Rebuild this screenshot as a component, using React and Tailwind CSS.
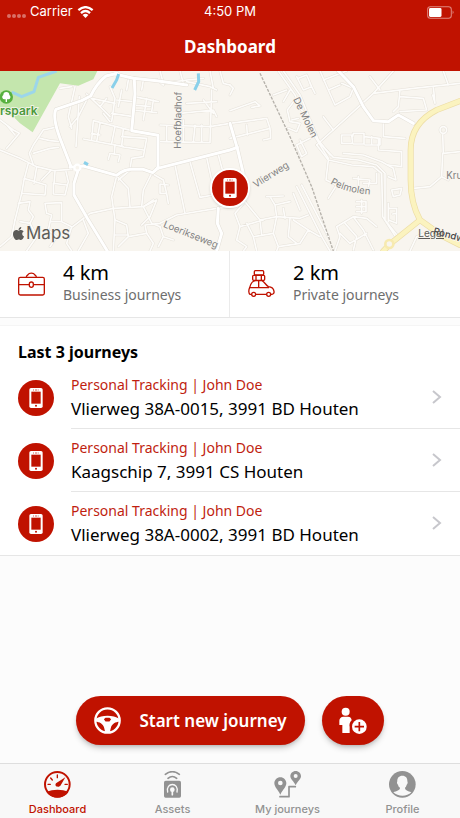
import { FaApple } from "react-icons/fa";

const journeys = [
  { id: 1, asset: "Personal Tracking | John Doe", address: "Vlierweg 38A-0015, 3991 BD Houten" },
  { id: 2, asset: "Personal Tracking | John Doe", address: "Kaagschip 7, 3991 CS Houten" },
  { id: 3, asset: "Personal Tracking | John Doe", address: "Vlierweg 38A-0002, 3991 BD Houten" }
];

const minorRoads = [
  // west
  "M0 150 L40 180 L58 190 L20 235 M20 165 L45 195 M0 240 L60 265 L110 290 L160 302 L215 298",
  "M130 180 L100 225 L88 250 L100 285 M120 205 L150 212 L180 215 M130 180 L165 172 M100 250 L150 235 L175 232",
  "M85 280 L72 330 L65 370 L135 375 L138 345 L72 325 M110 290 L102 340 M152 302 L125 330 M165 305 L162 340 L200 345 M160 340 L160 372 L195 375 L205 335 L198 305",
  "M65 370 L45 450 M55 400 L90 395 L85 420 L100 440 L90 460 L60 455 M135 400 L185 398 L185 455 L150 455 M135 400 L140 430 L155 435 L145 480 L170 500 L150 530 M185 455 L215 470 L200 520 L215 543",
  "M45 450 L35 500 L0 530 M90 460 L110 500 L80 543 M218 470 L270 430 L340 415 L430 410 L460 390",
  // north of the park
  "M225 50 L205 140 L215 175 M238 80 L228 230 M260 90 L235 140 L210 170 M180 55 L215 50",
  "M260 72 L300 110 L330 140 M300 110 L320 85 M275 85 L345 100 M330 50 L345 85 L335 155 M365 60 L355 110 M350 90 L400 95 M335 130 L400 140 M330 155 L310 130",
  "M280 152 L395 182 M280 152 L275 210 M250 207 L370 230 M300 160 L290 215 M345 170 L335 220 M275 190 L300 195 M370 175 L365 230 L430 240 M365 200 L440 205 L430 260 L395 265 L390 298",
  "M330 250 L360 255 L355 275 M330 250 L325 268 M345 225 L343 252 M403 80 L475 95 M400 120 L470 128 M440 85 L430 150 M460 90 L455 125 M400 105 L450 110",
  "M385 30 L380 60 M430 30 L425 60 M470 28 L490 45 M480 3 L490 40 L560 30 L610 25 M540 3 L550 40 M560 35 L630 50 L650 60 M630 3 L640 55 M660 3 L670 40 L690 45",
  "M480 165 L630 170 L690 160 M480 215 L630 218 L635 60 M585 165 L580 218 M550 150 L550 215 M605 165 L605 218 M500 170 L500 215 M560 100 L650 95 M540 130 L640 120 L650 140 M610 90 L640 130",
  // centre
  "M350 318 L335 380 L345 450 L340 543 M350 318 L385 355 L390 410 M390 300 L355 330 M455 310 L430 360 L425 410 M455 310 L490 330 L500 370 L480 370 L480 342 L505 345 M500 370 L505 400",
  "M430 410 L470 390 L450 440 L425 465 M430 410 L455 460 L480 470 M345 450 L380 465 L385 500 L440 490 L435 465 L480 460 M345 495 L385 495 M355 530 L385 500 M480 460 L530 435 L650 415 L700 410",
  "M525 285 L555 430 M570 275 L600 382 L640 375 M620 262 L635 330 M655 255 L670 310 M480 470 L490 500 L475 530 M490 500 L520 510 M440 490 L460 520 L450 543 M250 450 L265 490 L235 543",
  // around the station
  "M690 45 L700 55 L690 75 M690 122 L765 95 L780 108 L755 112 M690 205 L810 175 L800 145 L690 160 M810 175 L812 205 L790 210 M740 165 L742 195",
  "M835 3 L885 75 L930 175 L985 265 M850 3 L900 75 L955 210 L990 255 M820 75 L860 60 M870 60 L850 95 M885 90 L862 120 L870 155 L900 160 L890 185 L865 175 M875 150 L895 145 M900 210 L920 250 L905 260 L890 225 L930 205",
  "M890 20 L910 60 L935 50 L920 15 L895 25 M930 40 L945 70 M960 3 L985 60 L1005 105 L1050 80 L1060 55 L1025 40 M970 30 L1040 3 M985 60 L1020 45",
  "M950 225 L1060 125 L1120 70 L1240 55 L1380 40 M970 140 L1000 180 M1120 70 L1180 3 M1140 60 L1110 20 M1200 60 L1195 110 L1180 125 M1200 80 L1270 85 L1280 120 L1200 125 M1300 50 L1305 100 L1298 75 M1330 3 L1345 45",
  // east residential
  "M1025 195 L1055 195 L1058 220 L1025 220 Z M1058 200 L1060 190 L1092 190 L1092 222 L1060 222 M1092 200 L1140 205 L1140 225 L1095 225 M1115 200 L1115 225 M1150 160 L1150 200 L1215 205 M1135 205 L1135 240 L1205 245 L1205 290 L1165 285",
  "M950 225 L985 270 L1055 285 L1120 290 L1145 310 L1148 440 L1190 505 M960 220 L1000 262 L1075 270 L1130 285 L1155 310 L1155 450 L1195 500 M1030 250 L1090 255 L1145 275 L1180 295 L1188 330 L1165 320 M985 270 L978 330 L1010 345",
  "M1010 345 L985 385 M1060 325 L1110 330 L1105 350 M1075 320 L1075 345 M1090 340 L1130 340 L1130 310 M1070 395 L1098 395 L1098 425 L1070 425 M1085 390 L1085 430 M1070 410 L1098 410",
  "M1175 360 L1205 355 L1200 375 L1180 380 Z M1165 415 L1190 415 L1190 460 L1165 450 M1165 400 L1165 455 M1190 430 L1178 432 M1240 355 L1290 350 L1325 320 M1320 180 a10 10 0 1 0 20 0 a10 10 0 1 0 -20 0 M1328 190 L1330 250 L1380 245 M1328 250 L1325 320 L1345 330",
  // south
  "M800 380 L850 378 M810 380 L825 405 L870 395 M825 405 L830 440 L780 450 L735 395 M830 440 L900 445 L925 435 M850 415 L855 445 M890 350 L965 500 L990 543 M905 345 L985 500 M880 370 L900 420",
  "M735 395 L705 430 L720 470 L790 450 M720 470 L710 510 L740 530 L730 543 M740 460 L760 500 L820 490 L830 440 M760 500 L770 543 M820 490 L835 530 L900 520 L925 480 L880 450 M835 530 L830 543 M780 450 L785 495 M870 445 L865 500 L890 520 M925 480 L960 500",
  "M1010 470 L1060 440 L1100 445 L1130 470 M1020 490 L1050 520 L1100 490 M1035 460 L1070 500 L1060 540 M1060 440 L1090 480 L1120 540 M1010 470 L1020 500 L1005 543 M1230 543 L1250 500 L1300 480"
];

const majorRoads = [
  "M352 10 L318 18 Q290 40 272 78 L245 92 L168 118 Q156 140 180 205 L213 290",
  "M345 12 L400 25 L470 32 L560 45",
  "M210 292 L250 288 L350 316 Q375 296 400 298 L430 298 L458 308 L474 294",
  "M236 296 L222 340 L222 375 L262 445 L322 543",
  "M403 30 L405 72 L395 182 L474 196 L474 290",
  "M470 296 L690 240 L712 232",
  "M730 310 L712 235 L690 160",
  "M655 415 L652 460 L665 490 L650 543",
  "M1015 3 L1060 50 L1090 110 L1120 152 L1165 155 L1195 135 L1240 160"
];

const ringRoad =
  "M1380 93L1310 120Q1232 160 1232 240V330Q1232 400 1260 450M1260 450L1170 522L1150 543M1260 450L1330 500L1380 525";

function PhoneGlyph({ className }) {
  return (
    <svg viewBox="0 0 40 60" className={className} aria-hidden="true">
      <rect width="40" height="60" rx="5" fill="#fff" />
      <rect x="6" y="11" width="28" height="36" fill="#c01200" />
      <path d="M11 6h3M17 6h7M27 6h2" stroke="#c01200" strokeWidth="2" />
      <circle cx="20" cy="53" r="3" fill="#c01200" />
    </svg>
  );
}

function MapView() {
  return (
    <section aria-label="Map" className="relative h-[180px] overflow-hidden bg-[#f8f5ef]">
      <svg
        viewBox="0 3 1380 540"
        preserveAspectRatio="xMidYMid slice"
        className="h-full w-full font-['Inter',sans-serif]"
        aria-hidden="true"
      >
        <path d="M0 3H292L280 28L235 47L180 40L98 187L60 160L42 142L0 120Z" fill="#c4e6ad" />
        <path d="M170 3L115 22L102 65L65 80L35 66" fill="none" stroke="#9cd6ea" strokeWidth="9" strokeLinejoin="round" />
        <g fill="none" strokeLinejoin="round" strokeLinecap="round">
          {minorRoads.map((d) => (
            <path key={d} d={d} stroke="#e6e2da" strokeWidth="8" />
          ))}
          {minorRoads.map((d) => (
            <path key={d} d={d} stroke="#fdfcfa" strokeWidth="5" />
          ))}
          {majorRoads.map((d) => (
            <path key={d} d={d} stroke="#e3dfd7" strokeWidth="12" />
          ))}
          {majorRoads.map((d) => (
            <path key={d} d={d} stroke="#fff" strokeWidth="9" />
          ))}
          <path d={ringRoad} stroke="#ecdca4" strokeWidth="18" />
          <path d={ringRoad} stroke="#fbf3bf" strokeWidth="14" />
          <circle cx="1168" cy="522" r="12" fill="#f8f5ef" stroke="#f7eab0" strokeWidth="8" />
        </g>
        <circle cx="232" cy="293" r="9" fill="#f8f5ef" stroke="#fff" strokeWidth="7" />
        <path d="M356 12L350 30L336 54M595 10L596 35L584 60M252 277L264 284" fill="none" stroke="#8ad0ea" strokeWidth="9" />
        <path d="M780 10L870 200L935 350L1000 543" fill="none" stroke="#b5b1aa" strokeWidth="4" strokeDasharray="9 4" />
        <circle cx="19" cy="81" r="20" fill="#58b13f" />
        <path d="M19 66a9 9 0 0 1 9 9 7 7 0 0 1-4 13h-3v8h-4v-8h-3a7 7 0 0 1-4-13 9 9 0 0 1 9-9Z" fill="#fff" />
        <g fontSize="29" fill="#808080" stroke="#f8f5ef" strokeWidth="5" paintOrder="stroke">
          <text x="0" y="136" fontSize="36" fontWeight="600" fill="#4c9a3c">rspark</text>
          <text transform="translate(542 236) rotate(-89)">Hoefbladhof</text>
          <text transform="translate(488 470) rotate(22)">Loerikseweg</text>
          <text transform="translate(767 354) rotate(-32)">Vlierweg</text>
          <text transform="translate(879 88) rotate(64)">De Molen</text>
          <path id="pelmolen" d="M990 340Q1040 372 1130 374" fill="none" stroke="none" />
          <text>
            <textPath href="#pelmolen">Pelmolen</textPath>
          </text>
          <text x="1339" y="328">Kru</text>
          <text transform="translate(1298 492) rotate(15)" fill="#444" fontWeight="500">Rondweg</text>
        </g>
      </svg>

      <div className="absolute bottom-2 left-[11px] flex items-center font-['Inter',sans-serif] text-[17px] leading-5 text-[#5c5b58]">
        <FaApple className="size-[15px]" aria-hidden="true" />
        Maps
      </div>
      <a href="#legal" className="absolute right-4 bottom-2 font-['Inter',sans-serif] text-[10px] leading-5 text-[#5c5b58] underline">
        Legal
      </a>
      <div className="absolute top-[97px] left-1/2 flex size-10 -translate-x-1/2 items-center justify-center rounded-full border-2 border-white bg-[#c01200] shadow">
        <PhoneGlyph className="h-5 w-[14px]" />
      </div>
    </section>
  );
}

function BriefcaseIcon() {
  return (
    <svg viewBox="54 54 81 81" className="size-[27px]" fill="none" stroke="#c01200" strokeWidth="4" aria-hidden="true">
      <rect x="56" y="76" width="77" height="53" rx="5" />
      <path d="M56 98h32M100 98h33M79 75c1-6 5-5 6-8 2-5 16-5 18 0 1 3 5 2 6 8" />
      <rect x="88" y="90" width="12" height="16" rx="6" />
    </svg>
  );
}

function CarIcon() {
  return (
    <svg viewBox="54 60 81 81" className="size-[27px]" fill="none" stroke="#c01200" strokeWidth="4" strokeLinejoin="round" aria-hidden="true">
      <rect x="73" y="62" width="28" height="13" rx="3" />
      <rect x="68" y="76" width="36" height="15" rx="3" />
      <path d="M78 76v15M94 76v15" />
      <path d="M64 133h-4c-4-2-5-12-1-20 3-12 10-21 18-21h19c8 4 10 12 19 18 11 1 16 5 17 14 1 5-2 9-6 9h-3M78 133h31M60 113h57M86 92v20" />
      <circle cx="71" cy="133" r="6" />
      <circle cx="116" cy="133" r="6" />
    </svg>
  );
}

function WheelIcon() {
  return (
    <svg viewBox="96 68 82 82" className="size-[27px]" aria-hidden="true">
      <circle cx="137" cy="109" r="37" fill="none" stroke="#fff" strokeWidth="7" />
      <path
        fillRule="evenodd"
        d="M101 104C120 91 154 91 173 104V113C162 113 150 119 147 132L144 145H130L127 132C124 119 112 113 101 113ZM126 105L131 112H143L148 105L143 101H131Z"
        fill="#fff"
      />
    </svg>
  );
}

function AddPersonIcon() {
  return (
    <svg viewBox="271 67 84 82" className="size-7" aria-hidden="true">
      <circle cx="291" cy="80" r="12" fill="#fff" />
      <path d="M284 95h14c7 0 11 5 11 11-6 6-8 14-6 20v18h-22v-24h-9v-13c0-7 5-12 12-12Z" fill="#fff" />
      <circle cx="331" cy="125" r="24" fill="#c01200" />
      <circle cx="332" cy="125" r="22" fill="#fff" />
      <path d="M332 111v28M318 125h28" stroke="#c01200" strokeWidth="5" />
    </svg>
  );
}

function DashboardIcon() {
  return (
    <svg viewBox="132 33 81 81" className="size-[27px]" aria-hidden="true">
      <circle cx="172" cy="73" r="37" fill="none" stroke="currentColor" strokeWidth="6" />
      <path d="M140 96C158 87 187 87 205 96C192 118 153 118 140 96Z" fill="currentColor" />
      <path d="M172 45v8M152 54l5 6M144 73h7M195 73h7" stroke="currentColor" strokeWidth="4" strokeLinecap="round" />
      <path d="M196 52L183 74C178 85 161 80 168 70Z" fill="currentColor" />
    </svg>
  );
}

function AssetsIcon() {
  return (
    <svg viewBox="477 33 81 81" className="size-[27px]" fill="none" strokeLinecap="round" aria-hidden="true">
      <path d="M496 43Q517 27 538 43M504 55Q517 44 530 55" stroke="currentColor" strokeWidth="5" />
      <rect x="492" y="62" width="51" height="51" rx="5" fill="currentColor" />
      <path d="M503 96c-7-30 35-30 28 0" stroke="#f8f8f8" strokeWidth="4" />
      <circle cx="517" cy="89" r="7" fill="#f8f8f8" />
      <path d="M517 90v14" stroke="#f8f8f8" strokeWidth="5" />
    </svg>
  );
}

function JourneysIcon() {
  return (
    <svg viewBox="133 33 81 81" className="size-[27px]" aria-hidden="true">
      <path
        fillRule="evenodd"
        d="M152 52c10 0 18 8 18 18 0 11-11 19-18 34-7-15-18-23-18-34 0-10 8-18 18-18Zm0 10a7 7 0 1 0 0 14 7 7 0 0 0 0-14ZM198 33c9 0 16 7 16 16 0 9-10 14-16 27-6-13-16-18-16-27 0-9 7-16 16-16Zm0 9a6 6 0 1 0 0 12 6 6 0 0 0 0-12Z"
        fill="currentColor"
      />
      <path d="M151 110h27V80h19" fill="none" stroke="currentColor" strokeWidth="5" strokeLinecap="round" strokeLinejoin="round" />
    </svg>
  );
}

function ProfileIcon() {
  return (
    <svg viewBox="476 33 81 81" className="size-[27px]" aria-hidden="true">
      <circle cx="516" cy="73" r="40" fill="currentColor" />
      <path
        d="M516 47c10 0 16 7 15 17 2 2 1 8-2 10-1 5-3 7-5 9 0 9 9 9 19 14-13 14-40 14-54 0 10-5 20-5 20-14-3-2-5-4-6-9-3-2-4-8-2-10-1-10 5-17 15-17Z"
        fill="#f8f8f8"
      />
    </svg>
  );
}

const tabs = [
  { label: "Dashboard", Icon: DashboardIcon, active: true },
  { label: "Assets", Icon: AssetsIcon },
  { label: "My journeys", Icon: JourneysIcon },
  { label: "Profile", Icon: ProfileIcon }
];

function Header() {
  return (
    <header className="bg-[#c01200] text-white">
      <div className="grid h-6 grid-cols-3 items-center px-[6px] font-['Inter',sans-serif] text-[13px]">
        <div className="flex items-center gap-1">
          <svg viewBox="0 0 20 4" className="mt-2 h-1 w-5" fill="#fff" fillOpacity="0.4" aria-hidden="true">
            <circle cx="3" cy="2" r="2" />
            <circle cx="8" cy="2" r="2" />
            <circle cx="13" cy="2" r="2" />
            <circle cx="18" cy="2" r="2" />
          </svg>
          Carrier
          <svg viewBox="0 0 50 37" className="h-3 w-[17px]" aria-hidden="true">
            <path d="M3 13Q25-6 47 13M11 22Q25 9 39 22" fill="none" stroke="#fff" strokeWidth="7" />
            <path d="M16 28Q25 20 34 28L25 37Z" fill="#fff" />
          </svg>
        </div>
        <span className="text-center">4:50 PM</span>
        <svg viewBox="0 0 80 38" className="h-[13px] w-[27px] justify-self-end" aria-hidden="true">
          <rect x="2" y="2" width="70" height="34" rx="8" fill="none" stroke="#fff" strokeOpacity="0.5" strokeWidth="3" />
          <rect x="6" y="6" width="37" height="26" rx="4" fill="#fff" />
          <path d="M76 13q5 5 0 11Z" fill="#fff" fillOpacity="0.5" />
        </svg>
      </div>
      <h1 className="h-[47px] text-center text-[17px] leading-[46px] font-bold">Dashboard</h1>
    </header>
  );
}

function Stat({ icon, value, label }) {
  return (
    <div className="flex items-center gap-[18px] pb-[2px] pl-[18px]">
      {icon}
      <div>
        <p className="text-xl leading-6">{value}</p>
        <p className="text-sm leading-5 text-[#6e6e6e]">{label}</p>
      </div>
    </div>
  );
}

export default function App() {
  return (
    <div className="flex min-h-screen flex-col bg-[#fcfcfc] font-['Noto_Sans',sans-serif] text-black">
      <Header />
      <main className="flex flex-1 flex-col">
        <MapView />
        <section className="grid h-[67px] grid-cols-2 divide-x divide-[#ebebeb] border-b border-[#e6e6e6] bg-white">
          <Stat icon={<BriefcaseIcon />} value="4 km" label="Business journeys" />
          <Stat icon={<CarIcon />} value="2 km" label="Private journeys" />
        </section>

        <section className="mt-[7px] border-t border-b border-t-[#f5f5f5] border-b-[#e6e6e6] bg-white">
          <h2 className="px-[18px] pt-3 text-base leading-7 font-bold">Last 3 journeys</h2>
          <ul>
            {journeys.map((journey) => (
              <li key={journey.id} className="group">
                <a href={`#journey-${journey.id}`} className="flex h-[63px] items-center pl-[18px]">
                  <span className="flex size-9 shrink-0 items-center justify-center rounded-full bg-[#c01200]">
                    <PhoneGlyph className="h-5 w-[14px]" />
                  </span>
                  <span className="ml-[17px] flex h-full flex-1 items-center justify-between border-b border-[#e6e6e6] pr-[18px] group-last:border-transparent">
                    <span>
                      <span className="block text-sm leading-6 text-[#c01e10]">{journey.asset}</span>
                      <span className="block text-[17px] leading-6">{journey.address}</span>
                    </span>
                    <svg viewBox="0 0 10 16" className="h-4 w-[10px]" fill="none" stroke="#c7c7cc" strokeWidth="2" aria-hidden="true">
                      <path d="M1 2L8 8L1 14" />
                    </svg>
                  </span>
                </a>
              </li>
            ))}
          </ul>
        </section>

        <div className="mt-auto mb-[18px] flex justify-center gap-[17px] text-white">
          <button
            type="button"
            className="flex h-[49px] items-center gap-[18px] rounded-full bg-[#c01200] px-[18px] text-[17px] font-semibold shadow-md shadow-black/20"
          >
            <WheelIcon />
            Start new journey
          </button>
          <button
            type="button"
            aria-label="Add person"
            className="flex h-[49px] w-[62px] items-center justify-center rounded-full bg-[#c01200] shadow-md shadow-black/20"
          >
            <AddPersonIcon />
          </button>
        </div>
      </main>

      <nav className="grid h-[55px] grid-cols-4 border-t border-[#dedede] bg-[#f8f8f8] font-['Inter',sans-serif]">
        {tabs.map(({ label, Icon, active }) => (
          <a
            key={label}
            href="#tab"
            aria-current={active ? "page" : undefined}
            className={`flex flex-col items-center gap-[3px] pt-[7px] text-[11px] leading-4 font-medium ${
              active ? "text-[#c01200]" : "text-[#929292]"
            }`}
          >
            <Icon />
            {label}
          </a>
        ))}
      </nav>
    </div>
  );
}
